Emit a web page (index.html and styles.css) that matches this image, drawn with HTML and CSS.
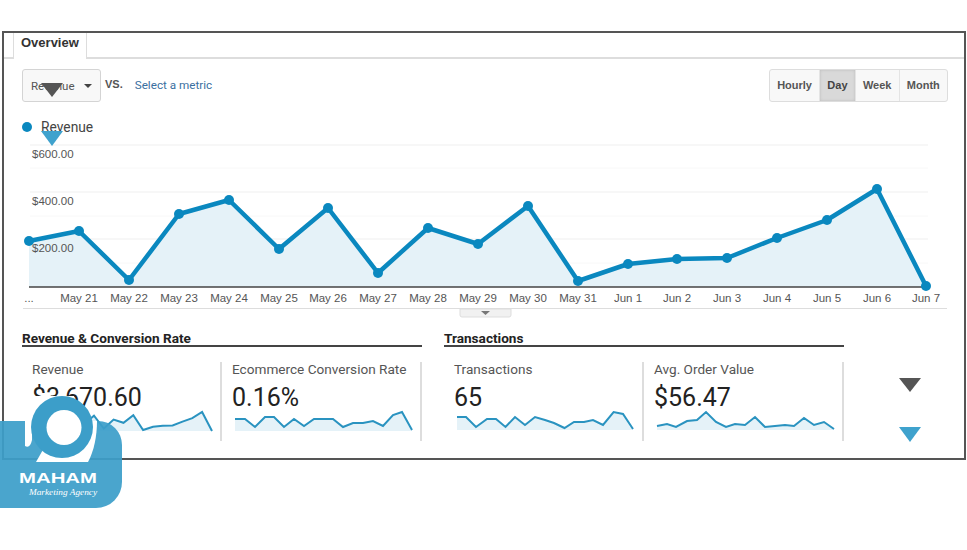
FILE: index.html
```html
<!DOCTYPE html>
<html lang="en">
<head>
  <meta charset="UTF-8">
  <title>Overview</title>
  <link rel="stylesheet" href="styles.css">
</head>
<body>
  <div class="frame">
    <div class="tabs">
      <div class="tab">Overview</div>
    </div>

    <div class="toolbar">
      <div class="metric-pick">
        <div class="select">Revenue<span class="caret"></span></div>
        <span class="vs">VS.</span>
        <a class="link">Select a metric</a>
      </div>
      <div class="btn-group">
        <div class="btn">Hourly</div>
        <div class="btn active">Day</div>
        <div class="btn">Week</div>
        <div class="btn">Month</div>
      </div>
    </div>

    <div class="legend"><span class="dot"></span>Revenue</div>

    <svg class="chart" viewBox="4 140 960 180" width="960" height="180">
      <g class="grid">
        <line x1="30" y1="145" x2="928" y2="145"/>
        <line x1="30" y1="192" x2="928" y2="192"/>
        <line x1="30" y1="239" x2="928" y2="239"/>
      </g>
      <g class="grid faint">
        <line x1="30" y1="168" x2="928" y2="168"/>
        <line x1="30" y1="216" x2="928" y2="216"/>
        <line x1="30" y1="263" x2="928" y2="263"/>
      </g>
      <polygon class="area" points="29,287 29,241 79,231 129,280 179,214 229,200 279,249 328,208 378,273 428,228 478,244 528,206 578,281 628,264 677,259 727,258 777,238 827,220 877,189 926,286 926,287"/>
      <line class="axis" x1="29" y1="287" x2="928" y2="287"/>
      <polyline class="line" points="29,241 79,231 129,280 179,214 229,200 279,249 328,208 378,273 428,228 478,244 528,206 578,281 628,264 677,259 727,258 777,238 827,220 877,189 926,286"/>
      <g class="points">
        <circle cx="29" cy="241" r="5"/><circle cx="79" cy="231" r="5"/><circle cx="129" cy="280" r="5"/>
        <circle cx="179" cy="214" r="5"/><circle cx="229" cy="200" r="5"/><circle cx="279" cy="249" r="5"/>
        <circle cx="328" cy="208" r="5"/><circle cx="378" cy="273" r="5"/><circle cx="428" cy="228" r="5"/>
        <circle cx="478" cy="244" r="5"/><circle cx="528" cy="206" r="5"/><circle cx="578" cy="281" r="5"/>
        <circle cx="628" cy="264" r="5"/><circle cx="677" cy="259" r="5"/><circle cx="727" cy="258" r="5"/>
        <circle cx="777" cy="238" r="5"/><circle cx="827" cy="220" r="5"/><circle cx="877" cy="189" r="5"/>
        <circle cx="926" cy="286" r="5"/>
      </g>
      <g class="y-labels">
        <text x="32" y="158">$600.00</text>
        <text x="32" y="205">$400.00</text>
        <text x="32" y="252">$200.00</text>
      </g>
      <g class="x-labels">
        <text x="29" y="302">...</text>
        <text x="79" y="302">May 21</text>
        <text x="129" y="302">May 22</text>
        <text x="179" y="302">May 23</text>
        <text x="229" y="302">May 24</text>
        <text x="279" y="302">May 25</text>
        <text x="328" y="302">May 26</text>
        <text x="378" y="302">May 27</text>
        <text x="428" y="302">May 28</text>
        <text x="478" y="302">May 29</text>
        <text x="528" y="302">May 30</text>
        <text x="578" y="302">May 31</text>
        <text x="628" y="302">Jun 1</text>
        <text x="677" y="302">Jun 2</text>
        <text x="727" y="302">Jun 3</text>
        <text x="777" y="302">Jun 4</text>
        <text x="827" y="302">Jun 5</text>
        <text x="877" y="302">Jun 6</text>
        <text x="926" y="302">Jun 7</text>
      </g>
      <line class="rule" x1="23" y1="308.5" x2="947" y2="308.5"/>
      <path class="handle" d="M460 309H511V315a2 2 0 0 1-2 2H462a2 2 0 0 1-2-2Z"/>
      <polygon class="handle-caret" points="481,311 490,311 485.500,315"/>
    </svg>

    <div class="sections">
      <section class="section">
        <h2>Revenue &amp; Conversion Rate</h2>
        <div class="metrics">
          <div class="metric">
            <div class="metric-label">Revenue</div>
            <div class="metric-value">$3,670.60</div>
            <svg class="spark" viewBox="22 410 200 24" width="200" height="24">
              <polygon class="spark-area" points="35,431 35,422.2 44.8,420.2 54.7,429.8 64.5,416.9 74.3,414.2 84.2,423.8 94,415.700 103.8,428.500 113.6,419.600 123.5,422.800 133.3,415.300 143.1,430 153,426.700 162.8,425.700 172.6,425.500 182.5,421.600 192.3,418.100 202.1,412 212,431"/>
              <polyline class="spark-line" points="35,422.2 44.8,420.2 54.7,429.8 64.5,416.9 74.3,414.2 84.2,423.8 94,415.700 103.8,428.500 113.6,419.600 123.5,422.800 133.3,415.300 143.1,430 153,426.700 162.8,425.700 172.6,425.500 182.5,421.600 192.3,418.100 202.1,412 212,431"/>
            </svg>
          </div>
          <div class="metric">
            <div class="metric-label">Ecommerce Conversion Rate</div>
            <div class="metric-value">0.16%</div>
            <svg class="spark" viewBox="222 410 200 24" width="200" height="24">
              <polygon class="spark-area" points="235,431 235,419 245,419 255,427 265,417 274,417 284,427 294,419 304,426 314,419 333,419 343,427 353,423 363,423 373,421 383,426 393,415 402,412 412,430 412,431"/>
              <polyline class="spark-line" points="235,419 245,419 255,427 265,417 274,417 284,427 294,419 304,426 314,419 333,419 343,427 353,423 363,423 373,421 383,426 393,415 402,412 412,430"/>
            </svg>
          </div>
        </div>
      </section>
      <section class="section">
        <h2>Transactions</h2>
        <div class="metrics">
          <div class="metric">
            <div class="metric-label">Transactions</div>
            <div class="metric-value">65</div>
            <svg class="spark" viewBox="444 410 200 24" width="200" height="24">
              <polygon class="spark-area" points="457,430 457,417 466,417 476,427 487,419 496,419 505.500,427 515,417 525,425 535,417 545,420 554,423 564.500,428 574,422 584,422 593,420 603,425 613.600,412 623,414 633,429 633,430"/>
              <polyline class="spark-line" points="457,417 466,417 476,427 487,419 496,419 505.500,427 515,417 525,425 535,417 545,420 554,423 564.500,428 574,422 584,422 593,420 603,425 613.600,412 623,414 633,429"/>
            </svg>
          </div>
          <div class="metric">
            <div class="metric-label">Avg. Order Value</div>
            <div class="metric-value">$56.47</div>
            <svg class="spark" viewBox="644 410 200 24" width="200" height="24">
              <polygon class="spark-area" points="657,430 657,426 667,424 676,427 687,421 697,420 706,412 716,422 726,427 735,424 745,425 755,417 765,427 775,426 785,425 794,426 804,418 814,425 824,422 834,429 834,430"/>
              <polyline class="spark-line" points="657,426 667,424 676,427 687,421 697,420 706,412 716,422 726,427 735,424 745,425 755,417 765,427 775,426 785,425 794,426 804,418 814,425 824,422 834,429"/>
            </svg>
          </div>
        </div>
      </section>
    </div>
  </div>

  <!-- overlays -->
  <span class="tri tri-dark tri-select"></span>
  <span class="tri tri-blue tri-legend"></span>
  <span class="tri tri-dark tri-side-top"></span>
  <span class="tri tri-blue tri-side-bottom"></span>

  <svg class="logo" viewBox="0 0 122 112" width="122" height="112">
    <path class="logo-bg" d="M0 25H98a24 24 0 0 1 24 24V86a26 26 0 0 1-26 26H0Z"/>
    <path class="logo-white" d="M25 0H74V30H32V44Q30 53 25 50Z"/>
    <path class="logo-white" d="M36 66H88C94 55 97 40 97 25H60L44 52Z"/>
    <circle class="logo-ring" cx="62" cy="31" r="31"/>
    <circle class="logo-white" cx="64" cy="31.500" r="17.500"/>
    <text class="logo-name" x="19" y="86.500" textLength="78" lengthAdjust="spacingAndGlyphs">MAHAM</text>
    <text class="logo-tag" x="29" y="99" textLength="68" lengthAdjust="spacingAndGlyphs">Marketing Agency</text>
  </svg>
</body>
</html>
```

FILE: styles.css
```css
:root {
  --blue: #0a88bf;
  --blue-soft: #e5f2f8;
  --logo-blue: #3c9ec9;
  --text: #555;
  --text-dark: #222;
}

body {
  margin: 0;
  padding: 31px 0 0 2px;
  background: #fff;
  font-family: Roboto, 'Liberation Sans', sans-serif;
  color: var(--text);
}

.frame {
  box-sizing: border-box;
  width: 964px;
  height: 429px;
  border: 2px solid #555;
}

.tabs {
  box-sizing: border-box;
  height: 26px;
  padding-left: 9px;
  border-bottom: 2px solid #ddd;
}

.tab {
  box-sizing: border-box;
  width: 74px;
  height: 26px;
  padding-left: 7px;
  background: #fff;
  border: 1px solid #ddd;
  border-top: none;
  border-bottom: none;
  font: bold 13px/20px 'Liberation Sans', sans-serif;
  color: #333;
}

.toolbar {
  display: flex;
  justify-content: space-between;
  margin: 10px 16px 0 18px;
  height: 33px;
}

.metric-pick {
  display: flex;
  align-items: center;
}

.select {
  box-sizing: border-box;
  display: flex;
  align-items: center;
  justify-content: space-between;
  width: 79px;
  height: 33px;
  padding: 0 8px;
  background: #f8f8f8;
  border: 1px solid #d4d4d4;
  border-radius: 3px;
  font-size: 11.5px;
}

.caret {
  border-left: 4px solid transparent;
  border-right: 4px solid transparent;
  border-top: 4px solid #444;
}

.vs {
  margin: -3px 0 0 4px;
  font: bold 11px 'Liberation Sans', sans-serif;
}

.link {
  margin: -1px 0 0 12px;
  font-size: 11.7px;
  color: #3a6f9f;
}

.btn-group {
  display: flex;
  border: 1px solid #ddd;
  border-radius: 3px;
  background: #f8f8f8;
}

.btn {
  padding: 0 7.2px;
  border-right: 1px solid #e4e4e4;
  font: bold 11px/31px 'Liberation Sans', sans-serif;
  color: #555;
}

.btn:last-child {
  border-right: none;
}

.btn.active {
  background: #d9d9d9;
  color: #444;
  box-shadow: inset 0 0 3px #bbb;
}

.legend {
  display: flex;
  align-items: center;
  margin: 17px 0 0 18px;
  font-size: 13.8px;
  line-height: 16px;
  color: #444;
}

.dot {
  width: 10px;
  height: 10px;
  margin-right: 9px;
  border-radius: 50%;
  background: var(--blue);
}

.chart {
  display: block;
  margin-top: 5px;
}

.grid line {
  stroke: #efefef;
  stroke-width: 1;
}

.grid.faint line {
  stroke: #f8f8f8;
}

.area {
  fill: var(--blue-soft);
}

.axis {
  stroke: #444;
  stroke-width: 1.5;
}

.line {
  fill: none;
  stroke: var(--blue);
  stroke-width: 4.5;
  stroke-linejoin: round;
}

.points circle {
  fill: var(--blue);
}

.y-labels text,
.x-labels text {
  font: 11.5px 'Liberation Sans', sans-serif;
  fill: #555;
}

.x-labels text {
  text-anchor: middle;
}

.rule {
  stroke: #ddd;
}

.handle {
  fill: #f1f1f1;
  stroke: #ddd;
}

.handle-caret {
  fill: #777;
}

.sections {
  display: flex;
  gap: 22px;
  margin: 11px 0 0 18px;
}

.section {
  width: 400px;
}

.section h2 {
  box-sizing: border-box;
  height: 16px;
  margin: 0;
  border-bottom: 2px solid #444;
  font-size: 13.6px;
  font-weight: 700;
  line-height: 14px;
  color: var(--text-dark);
}

.metrics {
  display: grid;
  grid-template-columns: 200px 200px;
  margin-top: 15px;
}

.metric {
  box-sizing: border-box;
  height: 79px;
  border-right: 2px solid #ddd;
}

.metric-label {
  padding-left: 10px;
  font-size: 13.6px;
  line-height: 14px;
  color: #555;
}

.metric-value {
  height: 25px;
  margin-top: 9px;
  padding-left: 10px;
  font-size: 25px;
  line-height: 26px;
  color: var(--text-dark);
}

.spark {
  display: block;
}

.spark-area {
  fill: var(--blue-soft);
}

.spark-line {
  fill: none;
  stroke: #2a93c0;
  stroke-width: 2;
}

.tri {
  position: absolute;
  width: 0;
  height: 0;
  border-left: 11px solid transparent;
  border-right: 11px solid transparent;
}

.tri-dark {
  border-top: 14px solid #555;
}

.tri-blue {
  border-top: 15px solid #3fa2cd;
}

.tri-select {
  left: 41px;
  top: 83px;
}

.tri-legend {
  left: 41px;
  top: 131px;
}

.tri-side-top {
  left: 899px;
  top: 378px;
}

.tri-side-bottom {
  left: 899px;
  top: 427px;
}

.logo {
  position: absolute;
  left: 0;
  top: 396px;
}

.logo-bg {
  fill: var(--logo-blue);
  fill-opacity: 0.93;
}

.logo-ring {
  fill: var(--logo-blue);
}

.logo-white {
  fill: #fff;
}

.logo-name {
  font: bold 14px 'Liberation Sans', sans-serif;
  fill: #fff;
}

.logo-tag {
  font: italic 9px 'Liberation Serif', serif;
  fill: #fff;
}
```
